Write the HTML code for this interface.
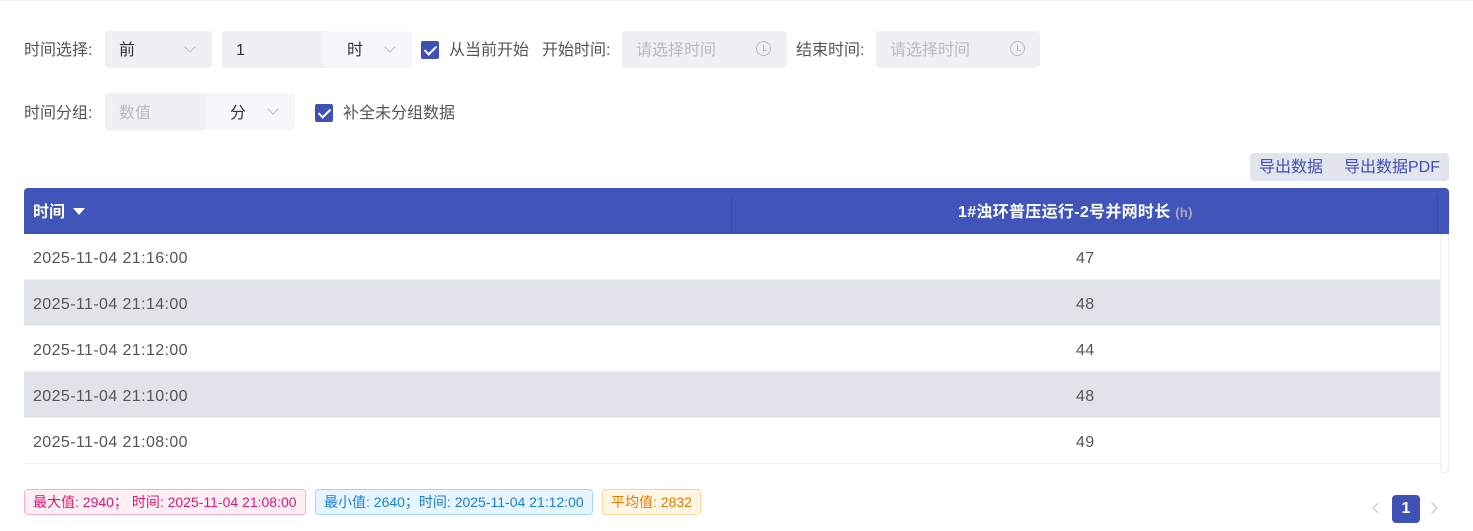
<!DOCTYPE html><html><head><meta charset="utf-8"><style>
*{box-sizing:border-box;margin:0;padding:0}
body{width:1473px;height:531px;background:#fff;font-family:"Liberation Sans","Noto Sans CJK SC",sans-serif;font-size:16px;color:#555;position:relative;overflow:hidden;border-top:1px solid #eee}
.a{position:absolute;white-space:nowrap;line-height:20px}
.box{background:#eff0f2;border-radius:4px}
.ph{color:#bbb}
.chev{width:8px;height:8px;border-right:1px solid #bbb;border-bottom:1px solid #bbb;transform:rotate(45deg)}
.cb{width:18px;height:18px;background:#3f51b5;border-radius:2px}
.cb:after{content:"";position:absolute;left:6px;top:2px;width:5px;height:10px;border-right:2px solid #fff;border-bottom:2px solid #fff;transform:rotate(45deg)}
.clock{width:15px;height:15px;border:1px solid #bbb;border-radius:50%}
.clock:after{content:"";position:absolute;left:6px;top:3px;width:3px;height:5px;border-left:1px solid #bbb;border-bottom:1px solid #bbb}
.row{position:absolute;left:24px;width:1416px;height:46px;border-bottom:1px solid #eceef2;letter-spacing:0.4px}
.row .t{position:absolute;left:9px;top:15px;line-height:20px}
.row .v{position:absolute;left:1052px;top:15px;line-height:20px}
.tag{position:absolute;top:488px;height:26px;border:1px solid;border-radius:4px;font-size:14px;line-height:24px;padding:0 8px}
</style></head><body>
<div class="a" style="left:24px;top:40px">时间选择:</div>
<div class="a box" style="left:105px;top:30px;width:107px;height:37px"></div>
<div class="a" style="left:119px;top:40px;color:#333">前</div>
<div class="a chev" style="left:186px;top:42px"></div>
<div class="a box" style="left:222px;top:30px;width:190px;height:37px;background:#f6f7f8"></div>
<div class="a" style="left:222px;top:30px;width:101px;height:37px;background:#eff0f2;border-radius:4px 0 0 4px"></div>
<div class="a" style="left:236px;top:40px;color:#333">1</div>
<div class="a" style="left:347px;top:40px;color:#333">时</div>
<div class="a chev" style="left:386px;top:42px"></div>
<div class="a cb" style="left:421px;top:40px"></div>
<div class="a" style="left:449px;top:40px">从当前开始</div>
<div class="a" style="left:542px;top:40px">开始时间:</div>
<div class="a box" style="left:622px;top:30px;width:165px;height:37px"></div>
<div class="a ph" style="left:636px;top:40px">请选择时间</div>
<div class="a clock" style="left:756px;top:40px"></div>
<div class="a" style="left:796px;top:40px">结束时间:</div>
<div class="a box" style="left:876px;top:30px;width:164px;height:37px"></div>
<div class="a ph" style="left:890px;top:40px">请选择时间</div>
<div class="a clock" style="left:1010px;top:40px"></div>

<div class="a" style="left:24px;top:103px">时间分组:</div>
<div class="a box" style="left:105px;top:92px;width:190px;height:37px;background:#f6f7f8"></div>
<div class="a" style="left:105px;top:92px;width:100px;height:37px;background:#eff0f2;border-radius:4px 0 0 4px"></div>
<div class="a ph" style="left:119px;top:103px">数值</div>
<div class="a" style="left:230px;top:103px;color:#333">分</div>
<div class="a chev" style="left:269px;top:104px"></div>
<div class="a cb" style="left:315px;top:103px"></div>
<div class="a" style="left:343px;top:103px">补全未分组数据</div>

<div class="a" style="left:1250px;top:152px;width:199px;height:28px;background:#e3e5ed;border-radius:4px"></div>
<div class="a" style="left:1259px;top:157px;color:#3f51b5">导出数据</div>
<div class="a" style="left:1344px;top:157px;color:#3f51b5">导出数据PDF</div>

<div class="a" style="left:24px;top:187px;width:1425px;height:46px;background:#4154b9;border-radius:4px 4px 0 0"></div>
<div class="a" style="left:731px;top:194px;width:1px;height:38px;background:#3a4aa8"></div>
<div class="a" style="left:1437px;top:194px;width:1px;height:38px;background:#3a4aa8"></div>
<div class="a" style="left:33px;top:202px;color:#fff;font-weight:bold">时间</div>
<div class="a" style="left:73px;top:207px;width:0;height:0;border-left:6px solid transparent;border-right:6px solid transparent;border-top:7px solid #fff"></div>
<div class="a" style="left:958px;top:202px;color:#fff;font-weight:bold;letter-spacing:0.3px">1#浊环普压运行-2号并网时长 <span style="color:#aab;font-size:13px">(h)</span></div>

<div class="row" style="top:233px"><span class="t">2025-11-04 21:16:00</span><span class="v">47</span></div>
<div class="row" style="top:279px;background:#e1e3eb"><span class="t">2025-11-04 21:14:00</span><span class="v">48</span></div>
<div class="row" style="top:325px"><span class="t">2025-11-04 21:12:00</span><span class="v">44</span></div>
<div class="row" style="top:371px;background:#e1e3eb"><span class="t">2025-11-04 21:10:00</span><span class="v">48</span></div>
<div class="row" style="top:417px"><span class="t">2025-11-04 21:08:00</span><span class="v">49</span></div>
<div class="a" style="left:1440px;top:233px;width:9px;height:239px;border:1px solid #eee;border-radius:0 0 4px 4px"></div>

<div class="tag" style="left:24px;background:#fdeff5;border-color:#f8b0cf;color:#d81b73">最大值: 2940；&nbsp;时间: 2025-11-04 21:08:00</div>
<div class="tag" style="left:315px;background:#e6f5ff;border-color:#a3d6f7;color:#1b7fd1">最小值: 2640；时间: 2025-11-04 21:12:00</div>
<div class="tag" style="left:602px;background:#fff6e6;border-color:#fad69a;color:#e07b00">平均值: 2832</div>

<div class="a" style="left:1374px;top:503px;width:8px;height:8px;border-left:1px solid #bbb;border-bottom:1px solid #bbb;transform:rotate(45deg)"></div>
<div class="a" style="left:1392px;top:494px;width:28px;height:28px;background:#3f51b5;border-radius:4px;color:#fff;font-weight:bold;text-align:center;line-height:28px">1</div>
<div class="a" style="left:1428px;top:503px;width:8px;height:8px;border-right:1px solid #bbb;border-top:1px solid #bbb;transform:rotate(45deg)"></div>
</body></html>
